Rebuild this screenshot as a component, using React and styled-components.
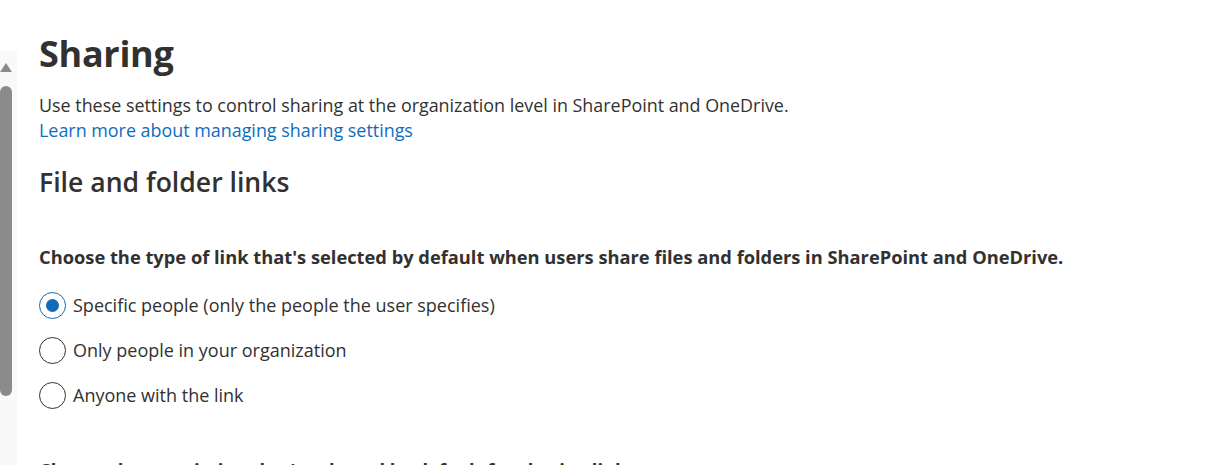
import React from 'react'
import styled, { createGlobalStyle } from 'styled-components'

const GlobalStyle = createGlobalStyle`
  html, body {
    margin: 0;
    padding: 0;
    background: #ffffff;
    overflow: hidden;
  }
  body {
    font-family: 'Open Sans', 'Noto Sans', sans-serif;
    color: #323130;
  }
`

const Page = styled.div`
  display: flex;
  height: 465px;
  overflow: hidden;
`

const ScrollRail = styled.div`
  flex: 0 0 17px;
  margin-top: 51px;
  background: #f9f9f9;
  display: flex;
  flex-direction: column;
  align-items: flex-start;
`

const ArrowUp = styled.div`
  width: 0;
  height: 0;
  margin: 12px 0 0 0;
  border-left: 6px solid transparent;
  border-right: 6px solid transparent;
  border-bottom: 9px solid #8b8b8b;
`

const Thumb = styled.div`
  width: 12px;
  height: 310px;
  margin-top: 14px;
  background: #8b8b8b;
  border-radius: 6px;
`

const Content = styled.main`
  flex: 1;
  padding: 30px 0 0 22px;
`

const Title = styled.h1`
  margin: 0;
  font-size: 36px;
  font-weight: 700;
  line-height: 48px;
  letter-spacing: -0.3px;
`

const Description = styled.p`
  margin: 15px 0 0;
  font-size: 17.9px;
  line-height: 25px;
`

const Link = styled.a`
  color: #0f6cbd;
  text-decoration: none;
`

const SectionTitle = styled.h2`
  margin: 21px 0 0;
  font-size: 26.6px;
  font-weight: 600;
  line-height: 36px;
`

const Question = styled.div`
  margin-top: 45px;
  font-size: 18.3px;
  font-weight: 700;
  line-height: 24px;
`

const Options = styled.div`
  display: flex;
  flex-direction: column;
  gap: 13px;
  margin-top: 20px;
`

const Option = styled.label`
  display: flex;
  align-items: center;
  gap: 7px;
  font-size: 18px;
  line-height: 32px;
  cursor: pointer;
`

const Circle = styled.span`
  box-sizing: border-box;
  width: 27px;
  height: 27px;
  border-radius: 50%;
  border: 1px solid ${p => (p.$checked ? '#0f6cbd' : '#323130')};
  display: flex;
  align-items: center;
  justify-content: center;
  &::after {
    content: '';
    width: 13px;
    height: 13px;
    border-radius: 50%;
    background: ${p => (p.$checked ? '#0f6cbd' : 'transparent')};
  }
`

const NextQuestion = styled(Question)`
  margin-top: 47px;
`

const options = [
  { label: 'Specific people (only the people the user specifies)', checked: true },
  { label: 'Only people in your organization', checked: false },
  { label: 'Anyone with the link', checked: false }
]

const App = () => (
  <Page>
    <GlobalStyle />
    <ScrollRail>
      <ArrowUp />
      <Thumb />
    </ScrollRail>
    <Content>
      <Title>Sharing</Title>
      <Description>
        Use these settings to control sharing at the organization level in SharePoint and OneDrive.
        <br />
        <Link href='#'>Learn more about managing sharing settings</Link>
      </Description>
      <SectionTitle>File and folder links</SectionTitle>
      <Question>
        Choose the type of link that's selected by default when users share files and folders in SharePoint and OneDrive.
      </Question>
      <Options>
        {options.map(o => (
          <Option key={o.label}>
            <Circle $checked={o.checked} />
            {o.label}
          </Option>
        ))}
      </Options>
      <NextQuestion>
        Choose the permission that's selected by default for sharing links.
      </NextQuestion>
    </Content>
  </Page>
)

export default App
